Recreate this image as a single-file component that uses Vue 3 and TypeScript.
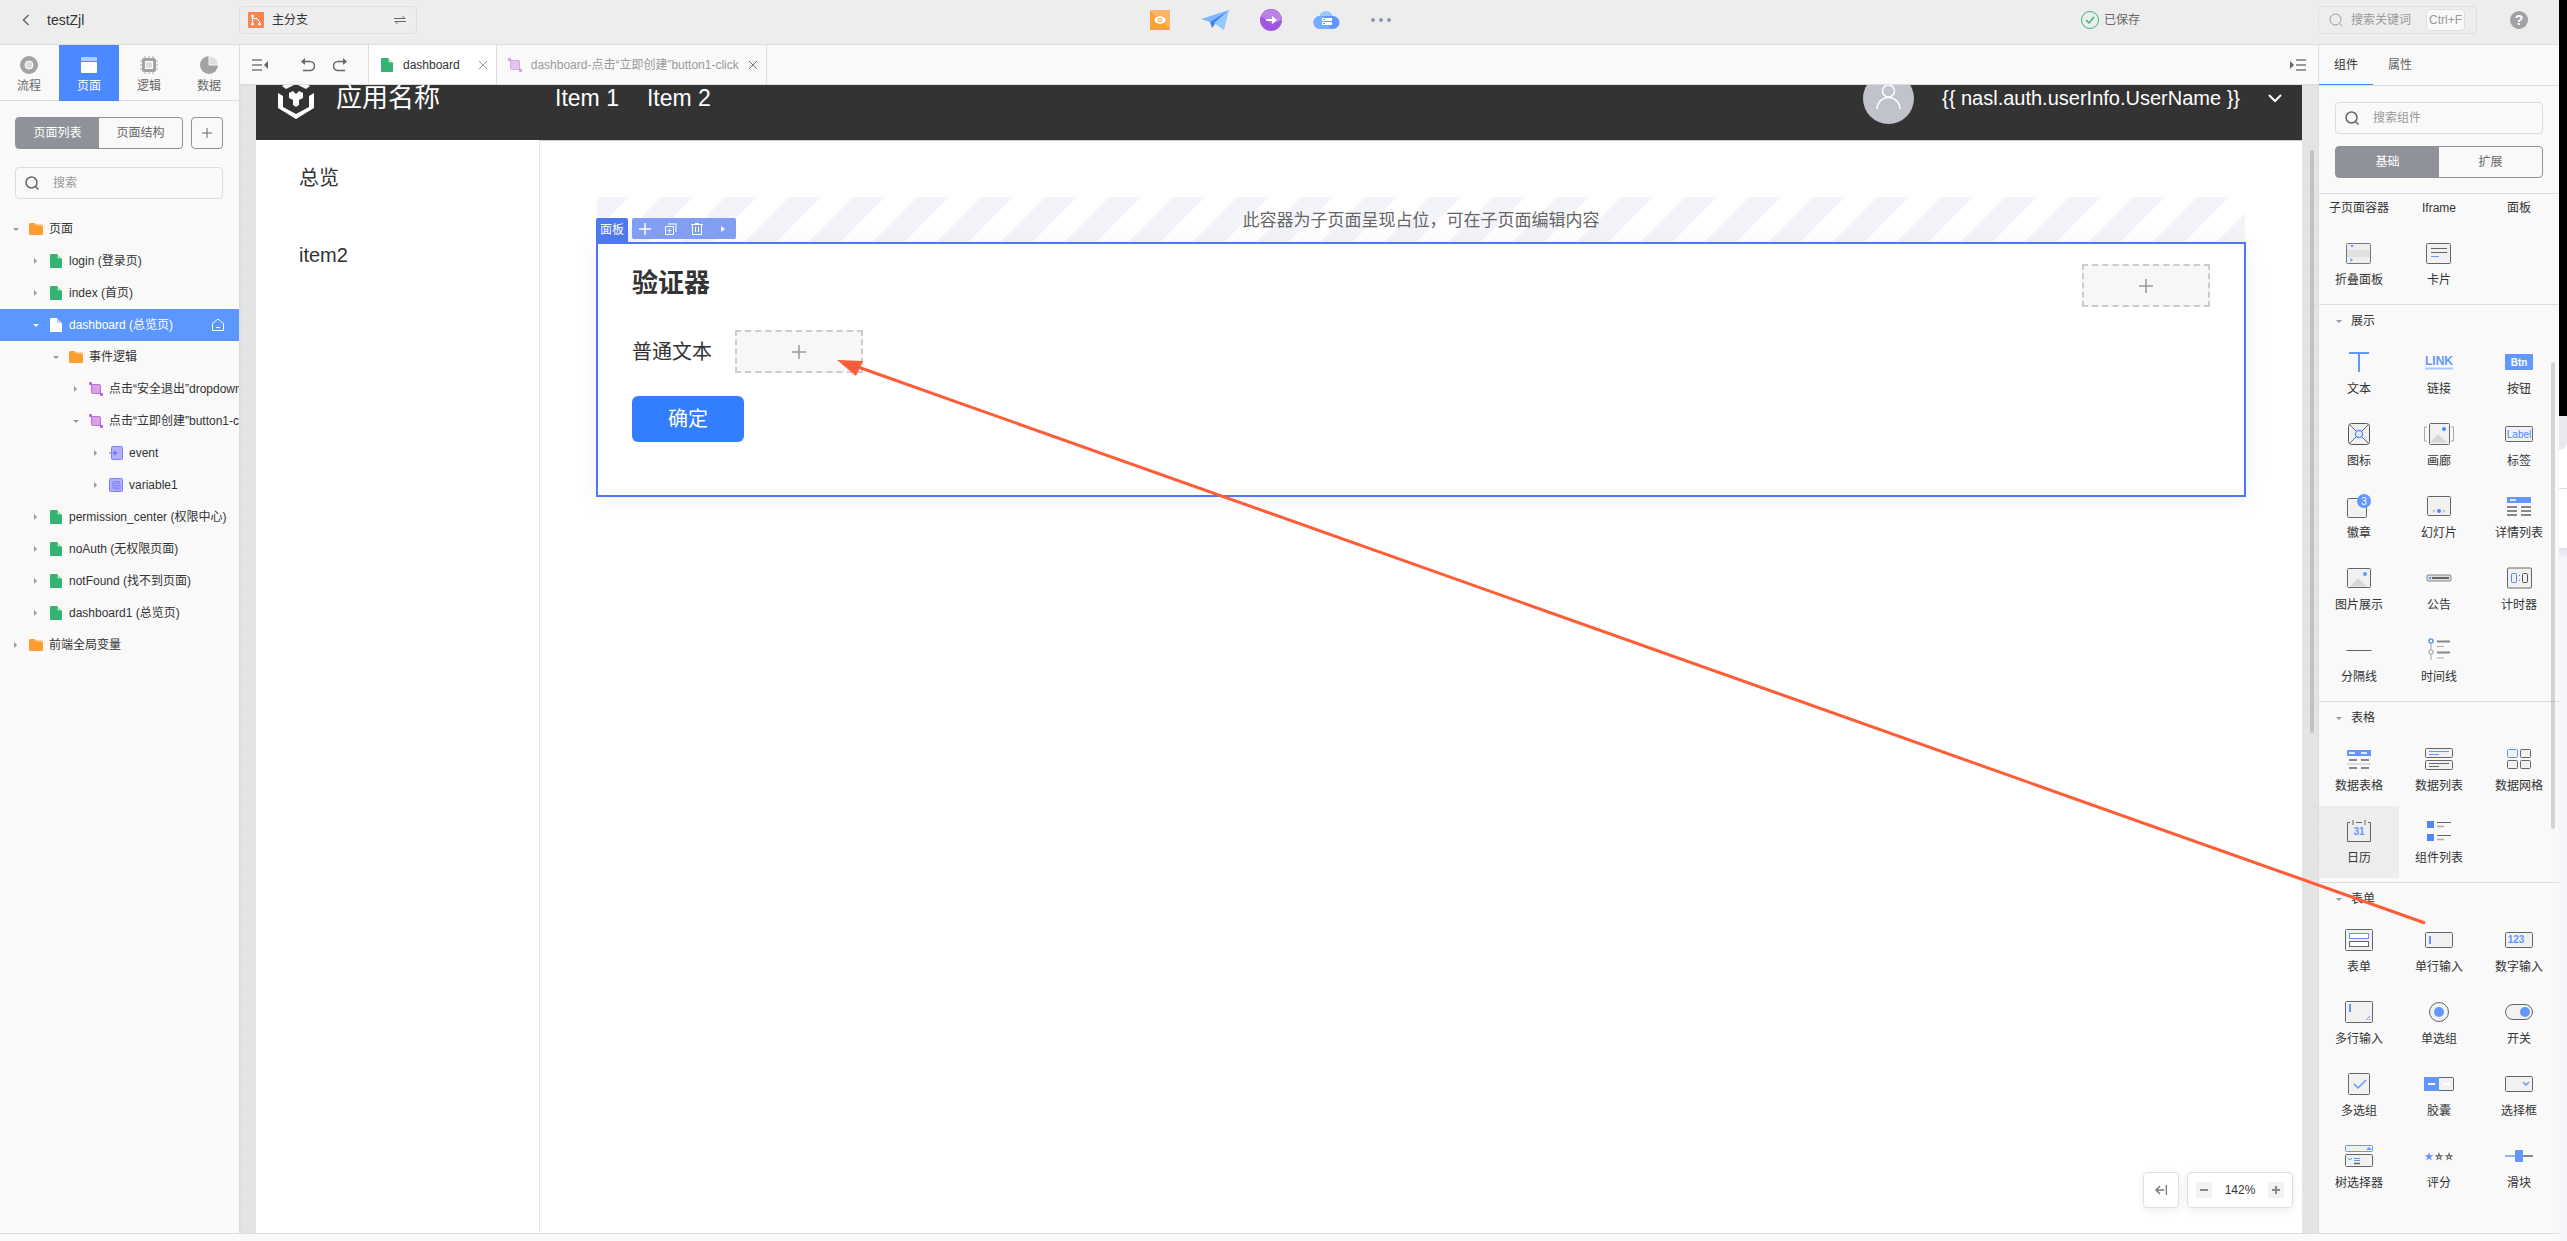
<script setup lang="ts">
import { ref } from 'vue'

interface TreeRow {
  level: number
  label: string
  icon: string
  open?: boolean
  active?: boolean
}

interface Widget {
  name: string
  icon: string
  hover?: boolean
}

interface Group {
  title?: string
  items: Widget[]
}

const userName = '{{ nasl.auth.userInfo.UserName }}'
const keyword = ref('')
const treeKeyword = ref('')
const widgetKeyword = ref('')

const modules = [
  { name: '流程', icon: 'flow' },
  { name: '页面', icon: 'page', active: true },
  { name: '逻辑', icon: 'logic' },
  { name: '数据', icon: 'data' },
]

const moduleIcons: Record<string, string> = {
  flow: '<circle cx="9" cy="9" r="6.5" fill="#ddd" stroke="#a0a2a6" stroke-width="5"/><circle cx="9" cy="9" r="4" fill="#ddd" stroke="#fff" stroke-width="1"/>',
  page: '<path d="M2 1h14a1 1 0 0 1 1 1v3H1V2a1 1 0 0 1 1-1z" fill="#b4ccff"/><path d="M1 6h16v10a1 1 0 0 1-1 1H2a1 1 0 0 1-1-1z" fill="#fff"/>',
  logic: '<path d="M5 0v18M13 0v18M0 5h18M0 13h18M9 0v18M0 9h18" stroke="#c4c5c8" stroke-width="1.5"/><rect x="2" y="2" width="14" height="14" rx="2" fill="#a0a2a6"/><rect x="5.5" y="5.5" width="7" height="7" fill="#ddd" stroke="#fff"/>',
  data: '<circle cx="9" cy="9" r="9" fill="#a0a2a6"/><path d="M9 0a9 9 0 0 1 9 9H9z" fill="#ddd" stroke="#f9f9f9" stroke-width="1"/>',
}

const tree: TreeRow[] = [
  { level: 0, label: '页面', icon: 'folder', open: true },
  { level: 1, label: 'login (登录页)', icon: 'file' },
  { level: 1, label: 'index (首页)', icon: 'file' },
  { level: 1, label: 'dashboard (总览页)', icon: 'fileWhite', open: true, active: true },
  { level: 2, label: '事件逻辑', icon: 'folder', open: true },
  { level: 3, label: '点击“安全退出”dropdown-item-click', icon: 'logic' },
  { level: 3, label: '点击“立即创建”button1-click', icon: 'logic', open: true },
  { level: 4, label: 'event', icon: 'param' },
  { level: 4, label: 'variable1', icon: 'local' },
  { level: 1, label: 'permission_center (权限中心)', icon: 'file' },
  { level: 1, label: 'noAuth (无权限页面)', icon: 'file' },
  { level: 1, label: 'notFound (找不到页面)', icon: 'file' },
  { level: 1, label: 'dashboard1 (总览页)', icon: 'file' },
  { level: 0, label: '前端全局变量', icon: 'folder' },
]

const treeIcons: Record<string, string> = {
  folder: '<path d="M7 2h5.5A1.5 1.5 0 0 1 14 3.500V6H7z" fill="#fdd09a"/><path d="M0 2.500A1.500 1.500 0 0 1 1.500 1H5.500L7.500 3.500H12.500L14 5V11.500A1.500 1.500 0 0 1 12.500 13H1.500A1.500 1.500 0 0 1 0 11.500z" fill="#fb9f34"/>',
  file: '<path d="M8 0L13 5H8z" fill="#a6dfc3"/><path d="M2 0H8.500V4.500H13V13a1 1 0 0 1-1 1H2a1 1 0 0 1-1-1V1a1 1 0 0 1 1-1z" fill="#35b373"/>',
  fileWhite: '<path d="M8 0L13 5H8z" fill="#bcd4ff"/><path d="M2 0H8V5H13V13a1 1 0 0 1-1 1H2a1 1 0 0 1-1-1V1a1 1 0 0 1 1-1z" fill="#fff"/>',
  logic: '<path d="M1 1l3 3M10 10l3 3" stroke="#b45fd8" stroke-width="1.500"/><rect x="2.500" y="2.500" width="9" height="9" rx="1.500" fill="#d6a3ea" stroke="#bd6fdd"/><rect x="0" y="0" width="3" height="3" rx="1" fill="#b45fd8"/><rect x="11" y="11" width="3" height="3" rx="1" fill="#b45fd8"/>',
  param: '<rect x="2.500" y="0.500" width="11" height="13" rx="1" fill="#b0b0ff" stroke="#7f7fff"/><path d="M0 7h6" stroke="#7f7fff"/><path d="M5 4.500L8.500 7L5 9.500z" fill="#7070ff"/>',
  local: '<rect x="0.500" y="0.500" width="13" height="13" rx="1" fill="#b0b0ff" stroke="#7f7fff"/><path d="M4 3.500h6.500v2H4zM4 5.500v3L3 11M4.500 7.500H11V11H9.500M5.500 9h3v2h-3z" fill="none" stroke="#7f7fff"/>',
}

const box = 'fill="#f1f1f1" stroke="#666"'
const mountain = '<path d="M-9 8.500L-1 0.500L8 8.500z" fill="#d6d6d6"/>'
const star = 'l1.100 3.200h3.400l-2.700 2.100l1 3.300l-2.800-2l-2.800 2l1-3.300l-2.700-2.100h3.400z'
const widgetIcons: Record<string, string> = {
  collapse: '<rect x="-12.500" y="-9.500" width="24" height="20" rx="1" fill="#eee" stroke="#777"/><rect x="-12" y="-3" width="23" height="7" fill="#e0e0e0"/><path d="M-9 -8h4l-2 2.500zM-8.500 5v4l2.500-2z" fill="#6397ff"/>',
  card: `<rect x="-12.500" y="-9.500" width="24" height="20" rx="1" ${box}/><path d="M-8-4.500H8M-8-0.500H8" stroke="#666"/><path d="M-8 3.500H0" stroke="#6397ff"/>`,
  text: '<path d="M-10-9H10M0-9V10" stroke="#6397ff" stroke-width="2"/>',
  link: '<text x="0" y="3" text-anchor="middle" font-size="12" font-weight="700" fill="#6397ff">LINK</text><path d="M-14 6.500H14" stroke="#a9c6ff" stroke-width="2"/>',
  button: '<rect x="-14" y="-8" width="28" height="16" rx="1" fill="#6397ff"/><text x="0" y="4" text-anchor="middle" font-size="10" font-weight="700" fill="#fff">Btn</text>',
  icon: '<rect x="-10.500" y="-10.500" width="21" height="21" rx="3" fill="#f1f1f1" stroke="#555"/><path d="M-9-9L-3-3M9-9L3-3M-9 9L-3 3M9 9L3 3" stroke="#666"/><circle r="3.500" fill="#f1f1f1" stroke="#6397ff" stroke-width="1.500"/>',
  gallery: `<rect x="-9.500" y="-10.500" width="20" height="21" rx="1" ${box}/>${mountain}<circle cx="5" cy="-5" r="2" fill="#4c87ff"/><path d="M-12-7h-2.500V7H-12M12-7h2.500V7H12" fill="none" stroke="#aaa"/>`,
  label: `<rect x="-13.500" y="-7.500" width="27" height="15" rx="1" ${box}/><text x="0" y="4" text-anchor="middle" font-size="10" fill="#4c87ff">Label</text>`,
  badge: `<rect x="-11.500" y="-7.500" width="19" height="19" rx="1" ${box}/><circle cx="5" cy="-5" r="7" fill="#6397ff"/><text x="5" y="-1" text-anchor="middle" font-size="10" fill="#fff">3</text>`,
  slides: `<rect x="-11.500" y="-9.500" width="23" height="19" rx="1" ${box}/><circle cx="-5" cy="5" r="1.500" fill="#ccc"/><circle cy="5" r="2" fill="#4c87ff"/><circle cx="5" cy="5" r="1.500" fill="#ccc"/>`,
  details: '<rect x="-12" y="-9" width="24" height="6" fill="#6397ff"/><path d="M-9-6H-3" stroke="#dbe7ff" stroke-width="2"/><path d="M-12 1H-2M2 1H12M-12 5H-2M2 5H12M-12 9H-2M2 9H12" stroke="#888" stroke-width="2"/>',
  image: `<rect x="-11.500" y="-9.500" width="23" height="19" rx="1" ${box}/>${mountain}<circle cx="6" cy="-4" r="2" fill="#6397ff"/>`,
  notice: '<rect x="-12" y="-3" width="24" height="6" rx="1" fill="#ddd" stroke="#888"/><path d="M-7 0H10" stroke="#666" stroke-width="2"/><path d="M-10 0h2" stroke="#6397ff" stroke-width="2"/>',
  timer: `<rect x="-11.500" y="-10" width="24" height="20" rx="1" ${box}/><rect x="-7.500" y="-4.500" width="5" height="9" rx="1" fill="#f1f1f1" stroke="#4c87ff"/><rect x="3.500" y="-4.500" width="5" height="9" rx="1" fill="#f1f1f1" stroke="#555"/><path d="M0-2.500h1M0 2.500h1" stroke="#777"/>`,
  divider: '<path d="M-12.500 0.500H12.500" stroke="#666"/>',
  timeline: '<path d="M-8-6V10" stroke="#ccc" stroke-width="2"/><circle cx="-8" cy="-9" r="2" fill="#fff" stroke="#6397ff" stroke-width="1.500"/><circle cx="-8" cy="2" r="2" fill="#fff" stroke="#bbb" stroke-width="1.500"/><path d="M-2-8.500H11M-2 2.500H11" stroke="#888" stroke-width="2"/><path d="M-2-3.500H5M-2 8H5" stroke="#aaa"/>',
  table: '<rect x="-12" y="-9" width="24" height="6" fill="#6397ff"/><path d="M-10-6H-4M2-6H8" stroke="#dbe7ff" stroke-width="2"/><path d="M-10 1H-2M2 1H10M-10 9H-2M2 9H10" stroke="#888" stroke-width="2"/><path d="M-12 5H12" stroke="#ddd" stroke-width="2"/>',
  list: `<rect x="-13.500" y="-10.500" width="27" height="9" rx="1" ${box}/><rect x="-13.500" y="1.500" width="27" height="9" rx="1" ${box}/><path d="M-10-7.500H10M-10-4.500H0" stroke="#6397ff"/><path d="M-10 4.500H10M-10 7.500H0" stroke="#666"/>`,
  grid: '<rect x="-11.500" y="-9.500" width="10" height="8" rx="1" fill="#f1f1f1" stroke="#6397ff"/><g fill="#f1f1f1" stroke="#666"><rect x="1.500" y="-9.500" width="10" height="8" rx="1"/><rect x="-11.500" y="1.500" width="10" height="8" rx="1"/><rect x="1.500" y="1.500" width="10" height="8" rx="1"/></g>',
  calendar: '<path d="M-9-8.500H-11.500V10.500H11.500V-8.500H9M-3-8.500H3" fill="none" stroke="#666"/><path d="M-6-11v5M6-11v5" stroke="#666"/><text x="0" y="4" text-anchor="middle" font-size="10" font-weight="700" fill="#6397ff">31</text>',
  components: '<path d="M-12-10h7v7h-7zM-12 3h7v7h-7z" fill="#4c87ff"/><path d="M-2-8.500H12M-2 4.500H12" stroke="#666"/><path d="M-2-4.500H5M-2 8.500H5" stroke="#aaa" stroke-width="1.500"/>',
  form: `<rect x="-13.500" y="-10.500" width="27" height="21" rx="1" ${box}/><rect x="-9.500" y="-6.500" width="19" height="5" fill="#fff" stroke="#6397ff"/><rect x="-9.500" y="1.500" width="19" height="5" fill="#fff" stroke="#666"/>`,
  input: `<rect x="-13.500" y="-7.500" width="27" height="15" rx="1" ${box}/><path d="M-9-4V4" stroke="#6397ff" stroke-width="2"/>`,
  number: `<rect x="-13.500" y="-7.500" width="27" height="15" rx="1" ${box}/><text x="-3" y="3" text-anchor="middle" font-size="10" font-weight="700" fill="#6397ff">123</text>`,
  textarea: `<rect x="-13.500" y="-10.500" width="27" height="21" rx="1" ${box}/><path d="M-9-8V0" stroke="#6397ff" stroke-width="2"/><path d="M7 8L11 4M10 8l1-1" stroke="#6397ff"/>`,
  radio: `<circle r="9.500" ${box}/><circle r="5" fill="#6397ff"/>`,
  toggle: `<rect x="-13.500" y="-7.500" width="27" height="15" rx="7.500" ${box}/><circle cx="6" r="5" fill="#6397ff"/>`,
  checkbox: `<rect x="-10.500" y="-10.500" width="21" height="21" rx="1" ${box}/><path d="M-5 0L-1 4L7-4" fill="none" stroke="#6397ff" stroke-width="1.500"/>`,
  capsule: `<rect x="-14.500" y="-6.500" width="29" height="13" rx="1" ${box}/><path d="M-15-7H0V7H-15z" fill="#6397ff"/><path d="M-11 0H-4M4 0H11" stroke="#fff" stroke-width="2"/>`,
  select: `<rect x="-13.500" y="-7.500" width="27" height="15" rx="1" ${box}/><path d="M4-2L7 1L10-2" fill="none" stroke="#6397ff" stroke-width="1.500"/>`,
  treeSelect: `<rect x="-13.500" y="-10.500" width="27" height="6" rx="1" fill="#f1f1f1" stroke="#6397ff"/><path d="M8-6.500L10-8.500L12-6.500z" fill="#6397ff" stroke="#6397ff"/><rect x="-13.500" y="-1.500" width="27" height="12" rx="1" ${box}/><path d="M-11 2l2 2l2-2" fill="none" stroke="#6397ff"/><path d="M-5 2.500H1M-5 4.500H1" stroke="#6397ff"/><path d="M-5 7.500H1" stroke="#666" stroke-width="1.500"/>`,
  rate: `<path d="M-10-4${star}" fill="#6397ff"/><g fill="#666"><path d="M0-4${star}"/><path d="M10-4${star}"/></g><g fill="#ddd"><circle cx="0" cy="1" r="1"/><circle cx="10" cy="1" r="1"/></g>`,
  slider: '<path d="M-14 0H0" stroke="#8fb3ff" stroke-width="2"/><path d="M0 0H14" stroke="#888" stroke-width="2"/><rect x="-4" y="-6" width="8" height="12" rx="1" fill="#6397ff"/>',
}

const groups: Group[] = [
  {
    items: [
      { name: '子页面容器', icon: 'card' },
      { name: 'Iframe', icon: 'card' },
      { name: '面板', icon: 'card' },
      { name: '折叠面板', icon: 'collapse' },
      { name: '卡片', icon: 'card' },
    ],
  },
  {
    title: '展示',
    items: [
      { name: '文本', icon: 'text' },
      { name: '链接', icon: 'link' },
      { name: '按钮', icon: 'button' },
      { name: '图标', icon: 'icon' },
      { name: '画廊', icon: 'gallery' },
      { name: '标签', icon: 'label' },
      { name: '徽章', icon: 'badge' },
      { name: '幻灯片', icon: 'slides' },
      { name: '详情列表', icon: 'details' },
      { name: '图片展示', icon: 'image' },
      { name: '公告', icon: 'notice' },
      { name: '计时器', icon: 'timer' },
      { name: '分隔线', icon: 'divider' },
      { name: '时间线', icon: 'timeline' },
    ],
  },
  {
    title: '表格',
    items: [
      { name: '数据表格', icon: 'table' },
      { name: '数据列表', icon: 'list' },
      { name: '数据网格', icon: 'grid' },
      { name: '日历', icon: 'calendar', hover: true },
      { name: '组件列表', icon: 'components' },
    ],
  },
  {
    title: '表单',
    items: [
      { name: '表单', icon: 'form' },
      { name: '单行输入', icon: 'input' },
      { name: '数字输入', icon: 'number' },
      { name: '多行输入', icon: 'textarea' },
      { name: '单选组', icon: 'radio' },
      { name: '开关', icon: 'toggle' },
      { name: '多选组', icon: 'checkbox' },
      { name: '胶囊', icon: 'capsule' },
      { name: '选择框', icon: 'select' },
      { name: '树选择器', icon: 'treeSelect' },
      { name: '评分', icon: 'rate' },
      { name: '滑块', icon: 'slider' },
    ],
  },
]
</script>

<template>
  <div class="screen">
    <div class="ide">
      <header class="topbar">
        <div class="top-left">
          <button class="bare back" aria-label="返回">
            <svg width="8" height="12" viewBox="0 0 8 12"><path d="M6.500 1L1.500 6l5 5" fill="none" stroke="#666" stroke-width="1.500" /></svg>
          </button>
          <span class="app-name">testZjl</span>
        </div>
        <button class="branch">
          <svg width="16" height="16" viewBox="0 0 16 16">
            <rect width="16" height="16" rx="1" fill="#fb8450" />
            <path d="M4.500 4v8M4.500 6.500h4l3 3v2" fill="none" stroke="#fff" />
            <circle cx="4.500" cy="4" r="1.500" fill="#fff" /><circle cx="4.500" cy="12" r="1.500" fill="#fff" /><circle cx="8.500" cy="6.500" r="1" fill="#fff" /><circle cx="11.500" cy="12" r="1.500" fill="#fff" />
          </svg>
          <span>主分支</span>
          <svg class="swap" width="12" height="8" viewBox="0 0 12 8"><path d="M0 2.500h11L8.500 0M12 5.500H1L3.500 8" fill="none" stroke="#666" /></svg>
        </button>
        <nav class="actions" aria-label="操作">
          <button class="bare" aria-label="预览">
            <svg width="20" height="20" viewBox="0 0 20 20">
              <rect width="20" height="20" rx="1" fill="#f9a03c" /><path d="M0 1a1 1 0 0 1 1-1h18a1 1 0 0 1 1 1v18z" fill="#fbb368" />
              <ellipse cx="10" cy="10" rx="5.500" ry="3.800" fill="#fff" /><circle cx="10" cy="10" r="1.800" fill="#fff" stroke="#f9a03c" />
            </svg>
          </button>
          <button class="bare" aria-label="发布">
            <svg width="28" height="20" viewBox="0 0 28 20">
              <path d="M0 9L28 0L9 12z" fill="#7db8ff" /><path d="M9 12L28 0L14 14l-3 4z" fill="#4080f5" /><path d="M28 0L23 20L13 13z" fill="#95c8ff" />
            </svg>
          </button>
          <button class="bare" aria-label="导出">
            <svg width="22" height="22" viewBox="0 0 22 22">
              <circle cx="11" cy="11" r="11" fill="#9f55e0" /><path d="M1 7A11 11 0 0 1 22 11L12 15z" fill="#b783e6" />
              <path d="M6 11h7" stroke="#fff" stroke-width="2" /><path d="M12 7l5 4l-5 4z" fill="#fff" />
            </svg>
          </button>
          <button class="bare" aria-label="云服务">
            <svg width="27" height="18" viewBox="0 0 27 18">
              <circle cx="13" cy="7" r="7" fill="#96c9ff" /><path d="M7 5h13a6.500 6.500 0 0 1 0 13H7A6.500 6.500 0 0 1 7 5z" fill="#5e97ff" /><path d="M7 5h3l8 13H7A6.500 6.500 0 0 1 7 5z" fill="#74adff" />
              <path d="M9 8.500h10M9 12.500h10" stroke="#fff" stroke-width="3" /><path d="M10 8.500h2M10 12.500h2" stroke="#5e97ff" />
            </svg>
          </button>
          <button class="bare" aria-label="更多">
            <svg width="20" height="4" viewBox="0 0 20 4" fill="#8e97a8"><circle cx="2" cy="2" r="2" /><circle cx="10" cy="2" r="2" /><circle cx="18" cy="2" r="2" /></svg>
          </button>
        </nav>
        <div class="saved">
          <svg width="18" height="18" viewBox="0 0 18 18" fill="none" stroke="#35b67a"><circle cx="9" cy="9" r="8.500" /><path d="M5 9l3 3l5-6" stroke-width="1.500" /></svg>
          <span>已保存</span>
        </div>
        <div class="top-right">
          <label class="top-search">
            <svg width="14" height="14" viewBox="0 0 14 14" fill="none" stroke="#999"><circle cx="6.500" cy="6.500" r="5.500" /><path d="M10.500 10.500l3 3" /></svg>
            <input v-model="keyword" type="text" placeholder="搜索关键词" aria-label="搜索关键词" />
            <kbd>Ctrl+F</kbd>
          </label>
          <button class="bare help" aria-label="帮助">?</button>
        </div>
      </header>

      <div class="workspace">
        <aside class="left">
          <nav class="modules">
            <button v-for="m in modules" :key="m.name" class="module" :class="{ active: m.active }">
              <svg width="18" height="18" viewBox="0 0 18 18" v-html="moduleIcons[m.icon]"></svg>
              <span>{{ m.name }}</span>
            </button>
          </nav>
          <div class="left-tools">
            <div class="segment">
              <button class="on">页面列表</button>
              <button>页面结构</button>
            </div>
            <button class="add" aria-label="新增">
              <svg width="10" height="10" viewBox="0 0 10 10"><path d="M5 0v10M0 5h10" stroke="#666" /></svg>
            </button>
          </div>
          <label class="search">
            <svg width="14" height="14" viewBox="0 0 14 14" fill="none" stroke="#666" stroke-width="1.500"><circle cx="6.500" cy="6.500" r="5.500" /><path d="M10.500 10.500l3 3" /></svg>
            <input v-model="treeKeyword" type="text" placeholder="搜索" aria-label="搜索页面" />
          </label>
          <ul class="tree">
            <li v-for="row in tree" :key="row.label" :class="['row', 'level-' + row.level, { active: row.active }]">
              <svg class="caret" width="8" height="8" viewBox="0 0 8 8">
                <path v-if="row.open" d="M1 3h6L4 6z" fill="currentColor" />
                <path v-else d="M2 1v6l3-3z" fill="currentColor" />
              </svg>
              <svg width="14" height="14" viewBox="0 0 14 14" v-html="treeIcons[row.icon]"></svg>
              <span class="row-label">{{ row.label }}</span>
              <svg v-if="row.active" class="home" width="14" height="14" viewBox="0 0 14 14" fill="none" stroke="#fff"><path d="M1.500 5.500L7 1l5.500 4.500v7h-11zM5 9.500h4" /></svg>
            </li>
          </ul>
        </aside>

        <main class="center">
          <div class="tabbar">
            <div class="history">
              <button class="bare" aria-label="收起左侧">
                <svg width="16" height="12" viewBox="0 0 16 12"><path d="M0 1h10M0 6h10M0 11h10" stroke="#999" stroke-width="2" /><path d="M16 2v8l-4-4z" fill="#666" /></svg>
              </button>
              <button class="bare undo" aria-label="撤销">
                <svg width="14" height="14" viewBox="0 0 14 14"><path d="M3 3.500h6a4.500 4.500 0 0 1 0 9H2" fill="none" stroke="#666" stroke-width="1.500" /><path d="M0 3.500L4 0v7z" fill="#666" /></svg>
              </button>
              <button class="bare redo" aria-label="重做">
                <svg width="14" height="14" viewBox="0 0 14 14"><path d="M11 3.500H5a4.500 4.500 0 0 0 0 9h7" fill="none" stroke="#666" stroke-width="1.500" /><path d="M14 3.500L10 0v7z" fill="#666" /></svg>
              </button>
            </div>
            <div class="tab active">
              <svg width="14" height="14" viewBox="0 0 14 14" v-html="treeIcons.file"></svg>
              <span>dashboard</span>
              <button class="bare close" aria-label="关闭"><svg width="8" height="8" viewBox="0 0 8 8"><path d="M0 0l8 8M8 0L0 8" stroke="#999" /></svg></button>
            </div>
            <div class="tab dim">
              <svg width="14" height="14" viewBox="0 0 14 14" v-html="treeIcons.logic"></svg>
              <span>dashboard-点击“立即创建”button1-click</span>
              <button class="bare close" aria-label="关闭"><svg width="8" height="8" viewBox="0 0 8 8"><path d="M0 0l8 8M8 0L0 8" stroke="#777" /></svg></button>
            </div>
            <button class="bare fold-right" aria-label="收起右侧">
              <svg width="16" height="12" viewBox="0 0 16 12"><path d="M6 1h10M6 6h10M6 11h10" stroke="#999" stroke-width="2" /><path d="M0 2v8l4-4z" fill="#666" /></svg>
            </button>
          </div>

          <div class="canvas">
            <div class="page">
              <header class="page-head">
                <svg class="logo" width="36" height="42" viewBox="0 0 36 42">
                  <path d="M0 16L5 19V30L18 37L31 30V19L36 16V31L18 42L0 31z" fill="#fff" />
                  <path d="M4 9L18 1L32 9L28 12L18 7L8 12z" fill="#fff" />
                  <path d="M11 16L15 14L18 17L21 14L25 16V21L21 23V28L18 30L15 28V23L11 21z" fill="#fff" />
                </svg>
                <span class="site">应用名称</span>
                <nav class="site-nav">
                  <a href="#">Item 1</a>
                  <a href="#">Item 2</a>
                </nav>
                <div class="user">
                  <svg width="51" height="51" viewBox="0 0 51 51">
                    <circle cx="25.500" cy="25.500" r="25.500" fill="#c0c3cc" />
                    <circle cx="25.500" cy="18" r="6" fill="none" stroke="#fff" stroke-width="1.500" />
                    <path d="M14 36a11.500 11.500 0 0 1 23 0" fill="none" stroke="#fff" stroke-width="1.500" />
                  </svg>
                  <span>{{ userName }}</span>
                  <svg class="down" width="14" height="9" viewBox="0 0 14 9"><path d="M1 1l6 6l6-6" fill="none" stroke="#fff" stroke-width="2" /></svg>
                </div>
              </header>
              <div class="page-body">
                <nav class="page-side">
                  <a href="#">总览</a>
                  <a href="#">item2</a>
                </nav>
                <section class="page-main">
                  <div class="slot">此容器为子页面呈现占位，可在子页面编辑内容</div>
                  <div class="panel">
                    <div class="panel-ops">
                      <span class="panel-tag">面板</span>
                      <div class="ops">
                        <button class="bare" aria-label="添加"><svg width="12" height="12" viewBox="0 0 12 12"><path d="M6 0v12M0 6h12" stroke="#fff" stroke-width="1.500" /></svg></button>
                        <button class="bare" aria-label="复制"><svg width="12" height="12" viewBox="0 0 12 12"><path d="M3 1h8v8" fill="none" stroke="#c4d1fb" stroke-width="2" /><path d="M.5 3.500h8v8h-8zM4.500 5.500v4M2.500 7.500h4" fill="none" stroke="#fff" /></svg></button>
                        <button class="bare" aria-label="删除"><svg width="12" height="12" viewBox="0 0 12 12"><path d="M0 1.500h12M4 .5h4M1.500 2v9.500h9V2M4.500 4v5M7.500 4v5" fill="none" stroke="#fff" /></svg></button>
                        <button class="bare" aria-label="更多"><svg width="12" height="12" viewBox="0 0 12 12"><path d="M4 3v6l4-3z" fill="#fff" /></svg></button>
                      </div>
                    </div>
                    <div class="panel-head">
                      <h2>验证器</h2>
                      <button class="drop" aria-label="添加组件"><svg width="14" height="14" viewBox="0 0 14 14"><path d="M7 0v14M0 7h14" stroke="#999" stroke-width="1.500" /></svg></button>
                    </div>
                    <div class="field">
                      <span>普通文本</span>
                      <button class="drop" aria-label="添加组件"><svg width="14" height="14" viewBox="0 0 14 14"><path d="M7 0v14M0 7h14" stroke="#999" stroke-width="1.500" /></svg></button>
                    </div>
                    <button class="confirm">确定</button>
                  </div>
                </section>
              </div>
            </div>
            <div class="scroll canvas-scroll"></div>
            <div class="zoom">
              <button class="zoom-card fit" aria-label="适应宽度"><svg width="12" height="12" viewBox="0 0 12 12"><path d="M1 6h8M5 2L1 6l4 4M11.500 1v10" fill="none" stroke="#777" stroke-width="1.500" /></svg></button>
              <div class="zoom-card level">
                <button class="step" aria-label="缩小"><svg width="8" height="8" viewBox="0 0 8 8"><path d="M0 4h8" stroke="#888" stroke-width="2" /></svg></button>
                <span>142%</span>
                <button class="step" aria-label="放大"><svg width="8" height="8" viewBox="0 0 8 8"><path d="M0 4h8M4 0v8" stroke="#888" stroke-width="2" /></svg></button>
              </div>
            </div>
          </div>
        </main>

        <aside class="right">
          <nav class="right-tabs">
            <button class="active">组件</button>
            <button>属性</button>
          </nav>
          <div class="right-tools">
            <label class="search">
              <svg width="14" height="14" viewBox="0 0 14 14" fill="none" stroke="#666" stroke-width="1.500"><circle cx="6.500" cy="6.500" r="5.500" /><path d="M10.500 10.500l3 3" /></svg>
              <input v-model="widgetKeyword" type="text" placeholder="搜索组件" aria-label="搜索组件" />
            </label>
            <div class="segment">
              <button class="on">基础</button>
              <button>扩展</button>
            </div>
          </div>
          <div class="library">
            <section v-for="(g, i) in groups" :key="i" class="group" :class="{ scrolled: !g.title }">
              <h3 v-if="g.title">
                <svg width="8" height="8" viewBox="0 0 8 8"><path d="M1 3h6L4 6z" fill="#999" /></svg>
                <span>{{ g.title }}</span>
              </h3>
              <div class="widgets">
                <div v-for="w in g.items" :key="w.name" class="widget" :class="{ hover: w.hover }">
                  <svg width="32" height="24" viewBox="-16 -12 32 24" v-html="widgetIcons[w.icon]"></svg>
                  <span>{{ w.name }}</span>
                </div>
              </div>
            </section>
            <div class="scroll library-scroll"></div>
          </div>
        </aside>
      </div>
      <footer class="statusbar"></footer>
    </div>

    <div class="behind">
      <div class="dark"></div>
      <div class="pill"></div>
      <div class="sheet"></div>
      <div class="sheet low"></div>
      <div class="rest"></div>
    </div>

    <svg class="pointer" aria-hidden="true">
      <line x1="858" y1="367" x2="2425" y2="923" stroke="#ff5c38" stroke-width="3" />
      <path d="M837 360L863 361L856 376z" fill="#ff5c38" />
    </svg>
  </div>
</template>

<style>
body {
  margin: 0;
  background: #f9f9f9;
}
</style>

<style scoped>
.screen {
  position: relative;
  display: flex;
  height: 100vh;
  overflow: hidden;
  font-family: "Liberation Sans", "Noto Sans CJK SC", sans-serif;
  font-size: 12px;
  line-height: 16px;
  color: #333;
}
.screen * {
  box-sizing: border-box;
}
svg {
  display: block;
  flex: none;
}
button,
input {
  font: inherit;
  color: inherit;
}
button {
  padding: 0;
  border: 0;
  background: none;
}
.bare {
  display: flex;
  align-items: center;
  justify-content: center;
}
input {
  flex: 1;
  min-width: 0;
  padding: 0;
  border: 0;
  outline: 0;
  background: none;
}
input::placeholder {
  color: #999;
  opacity: 1;
}
.ide {
  flex: 1;
  min-width: 0;
  display: flex;
  flex-direction: column;
}

/* top bar */
.topbar {
  position: relative;
  flex: none;
  display: flex;
  align-items: flex-start;
  height: 45px;
  border-bottom: 1px solid #ddd;
  background: #ededed;
}
.top-left {
  display: flex;
  align-items: center;
  width: 239px;
  height: 40px;
  padding-left: 22px;
}
.app-name {
  margin-left: 17px;
  font-size: 14px;
}
.branch {
  display: flex;
  align-items: center;
  gap: 8px;
  width: 178px;
  height: 28px;
  margin-top: 6px;
  padding: 0 10px 0 8px;
  border: 1px solid #e0e0e0;
  border-radius: 4px;
}
.swap {
  margin-left: auto;
}
.actions {
  flex: 1;
  display: flex;
  align-items: center;
  justify-content: center;
  gap: 31px;
  height: 40px;
  padding-left: 42px;
}
.saved {
  display: flex;
  align-items: center;
  gap: 5px;
  width: 237px;
  height: 40px;
  color: #666;
}
.top-right {
  display: flex;
  align-items: center;
  justify-content: space-between;
  width: 241px;
  height: 40px;
  padding-right: 31px;
}
.top-search {
  display: flex;
  align-items: center;
  gap: 8px;
  width: 159px;
  height: 28px;
  padding: 0 11px 0 10px;
  border: 1px solid #e0e0e0;
  border-radius: 4px;
}
kbd {
  padding: 2px;
  border: 1px solid #e0e0e0;
  border-radius: 4px;
  background: #f9f9f9;
  font: inherit;
  color: #999;
}
.help {
  width: 18px;
  height: 18px;
  border-radius: 9px;
  background: #a0a2a6;
  color: #fff;
  font-size: 14px;
  font-weight: 700;
}

/* left panel */
.workspace {
  flex: 1;
  min-height: 0;
  display: flex;
  border-bottom: 1px solid #ddd;
}
.left {
  flex: none;
  width: 240px;
  overflow: hidden;
  border-right: 1px solid #ddd;
  background: #f9f9f9;
}
.modules {
  display: flex;
  height: 56px;
  margin-left: -1px;
  border-bottom: 1px solid #ddd;
}
.module {
  flex: 1;
  display: flex;
  flex-direction: column;
  align-items: center;
  gap: 4px;
  height: 56px;
  padding-top: 11px;
  color: #666;
}
.module.active {
  background: #4c88ff;
  color: #fff;
}
.left-tools {
  display: flex;
  gap: 8px;
  margin: 16px 16px 18px 15px;
}
.segment {
  flex: 1;
  display: flex;
  height: 32px;
  border: 1px solid #8f9298;
  border-radius: 4px;
}
.segment button {
  flex: 1;
  color: #666;
}
.segment .on {
  background: #8f9298;
  color: #fff;
}
.add {
  display: flex;
  align-items: center;
  justify-content: center;
  width: 32px;
  height: 32px;
  border: 1px solid #8f9298;
  border-radius: 4px;
}
.search {
  display: flex;
  align-items: center;
  gap: 14px;
  height: 32px;
  padding: 0 9px;
  border: 1px solid #ddd;
  border-radius: 4px;
}
.left .search {
  margin: 0 16px 14px 15px;
}
.tree {
  margin: 0;
  padding: 0;
  list-style: none;
}
.row {
  display: flex;
  align-items: center;
  height: 32px;
  padding-left: 12px;
  overflow: hidden;
  white-space: nowrap;
}
.level-1 { padding-left: 32px; }
.level-2 { padding-left: 52px; }
.level-3 { padding-left: 72px; }
.level-4 { padding-left: 92px; }
.caret {
  margin-right: 9px;
  color: #999;
}
.row-label {
  margin-left: 6px;
}
.row.active {
  background: #5c97ff;
  color: #fff;
}
.row.active .caret {
  color: #fff;
}
.home {
  margin: 0 14px 0 auto;
}

/* centre */
.center {
  flex: 1;
  min-width: 0;
  display: flex;
  flex-direction: column;
}
.tabbar {
  flex: none;
  display: flex;
  height: 40px;
  border-bottom: 1px solid #ddd;
  background: #f9f9f9;
}
.history {
  display: flex;
  align-items: center;
  width: 129px;
  padding-left: 12px;
  border-right: 1px solid #ddd;
}
.undo {
  margin-left: 33px;
}
.redo {
  margin-left: 18px;
}
.tab {
  display: flex;
  align-items: center;
  padding: 0 9px 0 11px;
  border-right: 1px solid #ddd;
}
.tab span {
  margin-left: 9px;
}
.tab.active {
  background: #fff;
}
.tab.active .close {
  margin-left: 19px;
}
.dim {
  color: #999;
}
.dim > svg {
  opacity: 0.6;
}
.dim .close {
  margin-left: 10px;
}
.fold-right {
  margin: 0 12px 0 auto;
}
.canvas {
  position: relative;
  flex: 1;
  min-height: 0;
  display: flex;
  overflow: hidden;
  padding: 0 16px;
  background-color: #e4e4e4;
  background-image: linear-gradient(#dfdfdf 1px, transparent 1px), linear-gradient(90deg, #dfdfdf 1px, transparent 1px);
  background-size: 20px 20px;
}
.page {
  flex: 1;
  min-width: 0;
  display: flex;
  flex-direction: column;
  background: #fff;
}
.page a {
  color: inherit;
  text-decoration: none;
}
.page-head {
  flex: none;
  display: flex;
  align-items: center;
  height: 83px;
  margin-top: -28px;
  padding: 0 20px 1px 22px;
  background: #333;
  color: #fff;
}
.site {
  margin-left: 22px;
  font-size: 26px;
  line-height: 36px;
}
.site-nav {
  display: flex;
  gap: 28px;
  margin-left: 115px;
  font-size: 23px;
  line-height: 30px;
}
.user {
  display: flex;
  align-items: center;
  margin-left: auto;
  font-size: 20px;
  line-height: 28px;
}
.user span {
  margin: 0 28px;
}
.page-body {
  flex: 1;
  display: flex;
}
.page-side {
  flex: none;
  width: 284px;
  padding-left: 43px;
  border-right: 1px solid #e5e5e5;
  font-size: 20px;
}
.page-side a {
  display: block;
  line-height: 77px;
}
.page-main {
  flex: 1;
  min-width: 0;
  padding: 56px 57px 0;
  border-top: 1px solid #ccc;
}
.slot {
  height: 45px;
  line-height: 47px;
  text-align: center;
  font-size: 17px;
  color: #666;
  background-image: linear-gradient(135deg, #f3f4fa 25%, transparent 25%, transparent 50%, #f3f4fa 50%, #f3f4fa 75%, transparent 75%);
  background-size: 64px 64px;
}
.panel {
  position: relative;
  display: flex;
  flex-direction: column;
  align-items: flex-start;
  gap: 23px;
  margin: 0 -1px;
  padding: 20px 34px 53px;
  border: 2px solid #4e78ee;
  background: #fff;
  box-shadow: 0 4px 24px rgba(0, 0, 0, 0.06);
}
.panel-ops {
  position: absolute;
  top: -26px;
  left: -2px;
  display: flex;
  gap: 4px;
}
.panel-tag {
  width: 32px;
  height: 24px;
  border-radius: 2px 2px 0 0;
  background: #4e78ee;
  color: #fff;
  line-height: 24px;
  text-align: center;
}
.ops {
  display: flex;
  align-items: center;
  justify-content: space-between;
  width: 104px;
  height: 21px;
  padding: 0 7px;
  border-radius: 2px;
  background: #819ef3;
}
.panel-head {
  align-self: stretch;
  display: flex;
  align-items: flex-start;
  justify-content: space-between;
}
h2 {
  margin: 0;
  font-size: 26px;
  line-height: 38px;
}
.field {
  display: flex;
  align-items: center;
  gap: 23px;
  font-size: 20px;
  line-height: 28px;
}
.drop {
  display: flex;
  align-items: center;
  justify-content: center;
  width: 128px;
  height: 43px;
  border: 2px dashed #ccc;
  background: #f6f7f9;
}
.confirm {
  width: 112px;
  height: 46px;
  border-radius: 6px;
  background: #337eff;
  color: #fff;
  font-size: 20px;
}
.scroll {
  position: absolute;
  width: 4px;
  border-radius: 2px;
  background: rgba(0, 0, 0, 0.15);
}
.canvas-scroll {
  top: 65px;
  right: 4px;
  height: 583px;
}
.zoom {
  position: absolute;
  right: 25px;
  bottom: 25px;
  display: flex;
  gap: 8px;
}
.zoom-card {
  display: flex;
  align-items: center;
  justify-content: center;
  height: 36px;
  border: 1px solid #e0e0e0;
  border-radius: 4px;
  background: #fff;
  box-shadow: 0 2px 8px rgba(0, 0, 0, 0.08);
}
.fit {
  width: 36px;
}
.level {
  justify-content: space-between;
  width: 106px;
  padding: 0 8px;
}
.step {
  display: flex;
  align-items: center;
  justify-content: center;
  width: 16px;
  height: 16px;
  border-radius: 2px;
  background: #f2f2f2;
}

/* right panel */
.right {
  flex: none;
  display: flex;
  flex-direction: column;
  width: 241px;
  border-left: 1px solid #ddd;
  background: #f9f9f9;
}
.right-tabs {
  flex: none;
  display: flex;
  height: 41px;
  border-bottom: 1px solid #ddd;
}
.right-tabs button {
  width: 54px;
  height: 40px;
  color: #666;
}
.right-tabs .active {
  border-bottom: 1px solid #4c88ff;
  color: #333;
}
.right-tools {
  flex: none;
  display: flex;
  flex-direction: column;
  gap: 12px;
  padding: 16px 16px 15px;
}
.right-tools .segment {
  flex: none;
}
.library {
  position: relative;
  flex: 1;
  min-height: 0;
  overflow: hidden;
  border-top: 1px solid #ddd;
}
.group {
  padding-bottom: 4px;
  border-top: 1px solid #ddd;
}
.group.scrolled {
  margin-top: -38px;
  border-top: 0;
}
h3 {
  display: flex;
  align-items: center;
  gap: 8px;
  height: 32px;
  margin: 0;
  padding-left: 16px;
  font-size: 12px;
  font-weight: 400;
}
.widgets {
  display: grid;
  grid-template-columns: repeat(3, 80px);
}
.widget {
  display: flex;
  flex-direction: column;
  align-items: center;
  gap: 7px;
  height: 72px;
  padding-top: 13px;
}
.widget.hover {
  background: #ededed;
}
.library-scroll {
  top: 168px;
  right: 4px;
  height: 467px;
}
.statusbar {
  flex: none;
  height: 7px;
  background: #f9f9f9;
}

/* strip of the window behind */
.behind {
  flex: none;
  display: flex;
  flex-direction: column;
  width: 8px;
  background: #fff;
}
.dark {
  height: 416px;
  background: #000;
}
.pill {
  height: 34px;
  border-radius: 0 0 8px 0;
  background: #e8e9ee;
}
.sheet {
  height: 39px;
  border-bottom: 1px solid #ddd;
}
.sheet.low {
  height: 60px;
}
.rest {
  flex: 1;
  background: linear-gradient(#e4e5ec, #f5f6fc 10px);
}
.pointer {
  position: absolute;
  inset: 0;
  width: 100%;
  height: 100%;
  pointer-events: none;
}
</style>
